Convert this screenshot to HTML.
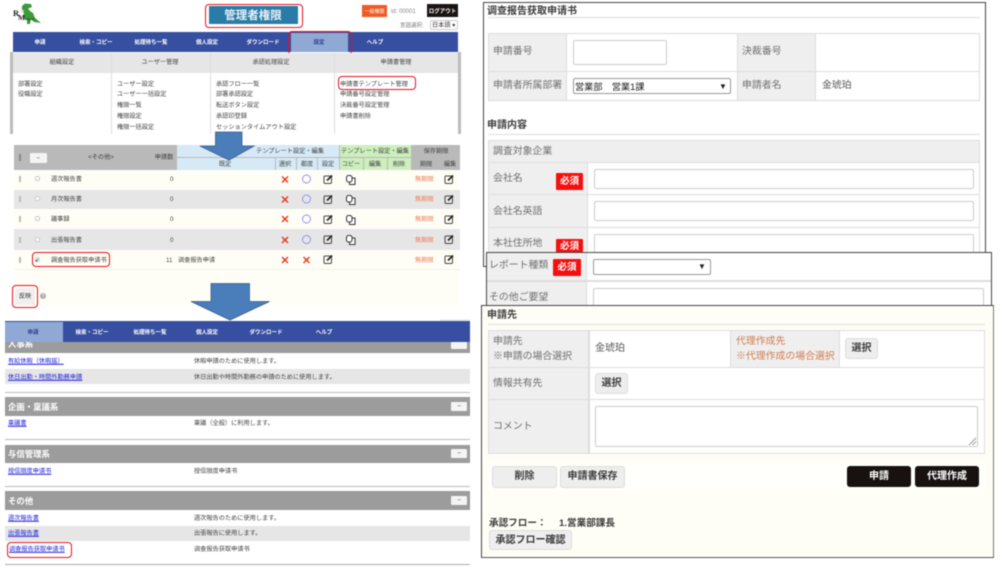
<!DOCTYPE html>
<html lang="ja"><head><meta charset="utf-8"><title>管理者権限</title>
<style>
html,body{margin:0;padding:0;background:#fff}
#w{position:relative;width:1000px;height:572px;overflow:hidden;background:#fff;font-family:"Liberation Sans","Noto Sans CJK JP",sans-serif;font-size:6.2px;color:#444;filter:blur(.4px)}
#w div,#w svg{position:absolute;box-sizing:border-box}
#w span{position:absolute;white-space:nowrap;line-height:12px;transform:translateY(-5.2px)}
#w span.c{transform:translate(-50%,-5.2px)}
#w span.q{transform:translate(-50%,-6px);color:#fff;font-size:9.500px;font-weight:bold}
.n{color:#fff;font-weight:bold;font-size:5.5px}
.r{border:1.3px solid #e8101c;border-radius:4px}
.a{color:#2222dd;text-decoration:underline}
.l{font-size:9.900px;color:#6f6f6f}
.f{background:#fff;border:1px solid #ccc;border-radius:2px}
.g{background:#efefef}
.rq{background:#f50f0f;border-radius:1px}
.b{background:#eee;border:1px solid #ddd;border-radius:3px}
.k{background:#17110f;border-radius:3px}
.h{background:#9c9c9c}
.m{background:#f4f4f4;border-radius:1px}
.bd{color:#3c3c3c;font-weight:bold;font-size:10px}
.w{color:#fff;font-weight:bold;font-size:8.400px}
</style></head><body><div id="w">
<svg width="0" height="0" style="left:0;top:0"><defs>
<g id="x"><path d="M-3-3 3 3M3-3-3 3" stroke="#e8341c" stroke-width="1.400" fill="none"/></g>
<g id="o"><circle r="4" fill="none" stroke="#8f8cf2" stroke-width=".9"/></g>
<g id="e"><rect x="-4" y="-3.500" width="7.500" height="7.500" rx="1.200" fill="none" stroke="#444" stroke-width="1"/><path d="M-1 1 4-4" stroke="#222" stroke-width="1.700"/></g>
<g id="cp"><rect x="-1.500" y="-2" width="5.500" height="6.500" fill="#fff" stroke="#333" stroke-width="1"/><rect x="-4.500" y="-4.500" width="5.500" height="6.500" rx="2" fill="#fff" stroke="#333" stroke-width="1"/></g>
</defs></svg>

<!-- top left -->
<svg style="left:13px;top:3px" width="30" height="22" viewBox="0 0 30 22"><path d="M9 3 12 .5 18 1 19 4 15 5.500 17 8 20 10 22 15 28 20 21 19 18 16 17 21 14 21 14 17 10 15 11 10 9 7Z" fill="#3b9a3a"/><path d="M8 7 11 7 10 11Z" fill="#e8d8c8"/></svg>
<span style="left:13px;top:13px;font:bold 8.500px 'Liberation Serif',serif;color:#222">R</span>
<span style="left:18px;top:18px;font:bold 7.500px 'Liberation Serif',serif;color:#222">M<b style="font-size:3.500px;color:#333">onster</b></span>
<div class="r" style="left:205px;top:4px;width:98px;height:24px"></div>
<div style="left:209px;top:6px;width:89px;height:18px;background:#2a7ca8"></div>
<span class="c" style="left:253px;top:15px;font-size:11.500px;font-weight:bold;color:#e8f2f7">管理者権限</span>
<div style="left:362px;top:5px;width:25px;height:12px;background:#f15a22"></div><span class="c" style="left:374.500px;top:10.500px;color:#fff;font-size:5px">一般権限</span>
<span style="left:391px;top:10.500px;font-size:6px;color:#888">id: 00001</span>
<div style="left:427px;top:4px;width:31px;height:13px;background:#1a1413"></div><span class="c" style="left:442.500px;top:10.500px;color:#fff;font-size:5.500px;font-weight:bold">ログアウト</span>
<span style="left:400px;top:25px;color:#777;font-size:5.500px">言語選択:</span>
<div class="f" style="left:430px;top:20px;width:28px;height:10px"></div><span style="left:432px;top:25px;color:#333">日本語 ▾</span>

<div style="left:13px;top:32px;width:445px;height:20px;background:#374fa0"></div>
<div style="left:291px;top:33px;width:57px;height:19px;background:#8fa9d4"></div>
<span class="c n" style="left:40px;top:42px">申請</span><span class="c n" style="left:96px;top:42px">検索・コピー</span><span class="c n" style="left:151px;top:42px">処理待ち一覧</span><span class="c n" style="left:207px;top:42px">個人設定</span><span class="c n" style="left:263px;top:42px">ダウンロード</span><span class="c n" style="left:319px;top:42px;color:#27408f">設定</span><span class="c n" style="left:375px;top:42px">ヘルプ</span>
<div class="r" style="left:288px;top:31px;width:64px;height:24px;border-width:1.500px"></div>

<div style="left:10px;top:52px;width:3px;height:82px;background:#bbb"></div><div style="left:458px;top:52px;width:3px;height:82px;background:#bbb"></div>
<div style="left:13px;top:53px;width:445px;height:20px;background:#e6e6e6"></div>
<div style="left:111px;top:53px;width:1px;height:81px;background:#ddd"></div><div style="left:210px;top:53px;width:1px;height:81px;background:#ddd"></div><div style="left:334px;top:53px;width:1px;height:81px;background:#ddd"></div>
<span class="c" style="left:62px;top:62px">組織設定</span><span class="c" style="left:160px;top:62px">ユーザー管理</span><span class="c" style="left:271px;top:62px">承認処理設定</span><span class="c" style="left:396px;top:62px">申請書管理</span>
<span style="left:18px;top:83.500px">部署設定</span><span style="left:18px;top:94px">役職設定</span>
<span style="left:117px;top:83.500px">ユーザー設定</span><span style="left:117px;top:94px">ユーザー一括設定</span><span style="left:117px;top:105px">権限一覧</span><span style="left:117px;top:115.500px">権限設定</span><span style="left:117px;top:126.500px">権限一括設定</span>
<span style="left:216px;top:83.500px">承認フロー一覧</span><span style="left:216px;top:94px">部署承認設定</span><span style="left:216px;top:105px">転送ボタン設定</span><span style="left:216px;top:115.500px">承認印登録</span><span style="left:216px;top:126.500px">セッションタイムアウト設定</span>
<span style="left:340px;top:83.500px">申請書テンプレート管理</span><span style="left:340px;top:94px">申請番号設定管理</span><span style="left:340px;top:105px">決裁番号設定管理</span><span style="left:340px;top:115.500px">申請書削除</span>
<div class="r" style="left:338px;top:75.500px;width:78px;height:14px"></div>

<!-- template table -->
<div style="left:14px;top:145px;width:446px;height:161px;background:#fffef6"></div>
<div style="left:14px;top:145px;width:446px;height:25px;background:#b9b9b9"></div>
<div style="left:177px;top:145px;width:162px;height:12px;background:#d6e9f6"></div>
<div style="left:177px;top:158px;width:98px;height:12px;background:#d6e9f6"></div><div style="left:276px;top:158px;width:20px;height:12px;background:#d6e9f6"></div><div style="left:297px;top:158px;width:20px;height:12px;background:#d6e9f6"></div><div style="left:318px;top:158px;width:21px;height:12px;background:#d6e9f6"></div>
<div style="left:340px;top:145px;width:71px;height:12px;background:#cdeebd"></div>
<div style="left:340px;top:158px;width:23px;height:12px;background:#cdeebd"></div><div style="left:364px;top:158px;width:23px;height:12px;background:#cdeebd"></div><div style="left:388px;top:158px;width:23px;height:12px;background:#cdeebd"></div>
<div style="left:19px;top:154px;width:2px;height:7px;background:#888"></div>
<div class="m" style="left:30px;top:153px;width:17px;height:10px"></div><span class="c" style="left:38px;top:158px">−</span>
<span class="c" style="left:101px;top:157px">&lt;その他&gt;</span><span class="c" style="left:164px;top:157px">申請数</span>
<span class="c" style="left:290px;top:151px">テンプレート設定・編集</span>
<span class="c" style="left:225px;top:164px">既定</span><span class="c" style="left:285px;top:164px">選択</span><span class="c" style="left:307px;top:164px">都度</span><span class="c" style="left:328px;top:164px">設定</span>
<span class="c" style="left:375px;top:151px">テンプレート設定・編集</span><span class="c" style="left:351px;top:164px">コピー</span><span class="c" style="left:375px;top:164px">編集</span><span class="c" style="left:399px;top:164px">削除</span>
<span class="c" style="left:436px;top:151px">保存期限</span><span class="c" style="left:426px;top:164px">期限</span><span class="c" style="left:450px;top:164px">編集</span>

<div style="left:14px;top:190px;width:446px;height:19px;background:#e6e6e6"></div>
<div style="left:14px;top:229px;width:446px;height:21px;background:#e6e6e6"></div>
<div style="left:14px;top:269px;width:446px;height:1px;background:#eee"></div>

<div style="left:19px;top:176px;width:2px;height:6px;background:#bbb"></div><div style="left:19px;top:196px;width:2px;height:6px;background:#bbb"></div><div style="left:19px;top:216px;width:2px;height:6px;background:#bbb"></div><div style="left:19px;top:237px;width:2px;height:6px;background:#bbb"></div><div style="left:19px;top:257px;width:2px;height:6px;background:#bbb"></div>
<div class="f" style="left:35px;top:176px;width:5px;height:5px"></div><div class="f" style="left:35px;top:196px;width:5px;height:5px"></div><div class="f" style="left:35px;top:216px;width:5px;height:5px"></div><div class="f" style="left:35px;top:237px;width:5px;height:5px"></div>
<div class="f" style="left:35px;top:257px;width:5px;height:5px"></div><span style="left:35px;top:259.500px;font-size:5px;color:#222">✔</span>
<span style="left:51px;top:179px">週次報告書</span><span style="left:51px;top:199px">月次報告書</span><span style="left:51px;top:219px">議事録</span><span style="left:51px;top:239.500px">出張報告書</span><span style="left:51px;top:259.500px">調査報告获取申请书</span>
<span style="left:170px;top:179px">0</span><span style="left:170px;top:199px">0</span><span style="left:170px;top:219px">0</span><span style="left:170px;top:239.500px">0</span><span style="left:166px;top:259.500px">11</span>
<span style="left:178px;top:259.500px">调查报告申请</span>
<div class="r" style="left:32px;top:252px;width:78px;height:15px"></div>
<svg style="left:0;top:0" width="460" height="270">
<use href="#x" x="285" y="179.500"/><use href="#x" x="285" y="199.500"/><use href="#x" x="285" y="219"/><use href="#x" x="285" y="240"/><use href="#x" x="285" y="260"/><use href="#x" x="306.500" y="260"/>
<use href="#o" x="306.500" y="179"/><use href="#o" x="306.500" y="199"/><use href="#o" x="306.500" y="219"/><use href="#o" x="306.500" y="239.500"/>
<use href="#e" x="328" y="179.500"/><use href="#e" x="328" y="199.500"/><use href="#e" x="328" y="219.500"/><use href="#e" x="328" y="239.500"/><use href="#e" x="328" y="259.500"/>
<use href="#e" x="449" y="179.500"/><use href="#e" x="449" y="199.500"/><use href="#e" x="449" y="219.500"/><use href="#e" x="449" y="239.500"/><use href="#e" x="449" y="259.500"/>
<use href="#cp" x="351" y="180"/><use href="#cp" x="351" y="200"/><use href="#cp" x="351" y="220"/><use href="#cp" x="351" y="240"/>
</svg>
<span style="left:415px;top:179px;color:#ef7a5a">無期限</span><span style="left:415px;top:199px;color:#ef7a5a">無期限</span><span style="left:415px;top:219px;color:#ef7a5a">無期限</span><span style="left:415px;top:239.500px;color:#ef7a5a">無期限</span><span style="left:415px;top:259.500px;color:#ef7a5a">無期限</span>

<div class="r" style="left:12px;top:285px;width:26px;height:23px;border-width:1.500px"></div>
<div class="m" style="left:15px;top:288px;width:20px;height:17px;background:#efefef"></div><span class="c" style="left:25px;top:296px;color:#333">反映</span>
<div style="left:40px;top:293px;width:6px;height:6px;border-radius:50%;background:#aaa"></div><span class="c" style="left:43px;top:296px;color:#fff;font-size:5px">?</span>

<!-- arrows -->
<svg style="left:190px;top:130px" width="85" height="195" viewBox="0 0 85 195"><path d="M25.500 2H52V16H64L39 30 10 16H25.500Z" fill="#4a7ebb" stroke="#385d8a" stroke-width=".8"/><path d="M21 153.500H59.500V171.500H79.500L40 190 1 171.500H21Z" fill="#4a7ebb" stroke="#385d8a" stroke-width=".8"/></svg>

<!-- app list -->
<div style="left:440px;top:319px;width:30px;height:2px;background:#eee"></div>
<div class="h" style="left:5px;top:342px;width:465px;height:11px"></div>
<span class="w" style="left:8px;top:343px">人事系</span>
<div class="m" style="left:451px;top:342px;width:16px;height:7px"></div>
<div style="left:5px;top:321px;width:465px;height:21px;background:#374fa0"></div>
<div style="left:5px;top:322px;width:58px;height:20px;background:#8fa9d4"></div>
<span class="c n" style="left:33px;top:331.500px;color:#27408f">申請</span><span class="c n" style="left:92px;top:331.500px">検索・コピー</span><span class="c n" style="left:150px;top:331.500px">処理待ち一覧</span><span class="c n" style="left:207px;top:331.500px">個人設定</span><span class="c n" style="left:266px;top:331.500px">ダウンロード</span><span class="c n" style="left:324px;top:331.500px">ヘルプ</span>

<span class="a" style="left:8px;top:361px">有給休暇（休暇届）</span><span style="left:194px;top:361px">休暇申請のために使用します。</span>
<div style="left:5px;top:369px;width:465px;height:15px;background:#e6e6e6"></div>
<span class="a" style="left:8px;top:376.500px">休日出勤・時間外勤務申請</span><span style="left:194px;top:376.500px">休日出勤や時間外勤務の申請のために使用します。</span>
<div style="left:5px;top:391.500px;width:465px;height:1px;background:#bbb"></div>

<div class="h" style="left:5px;top:397px;width:465px;height:19px"></div><span class="w" style="left:8px;top:406px">企画・稟議系</span><div class="m" style="left:451px;top:402px;width:16px;height:9px"></div><span class="c" style="left:459px;top:406px">−</span>
<span class="a" style="left:8px;top:423px">稟議書</span><span style="left:194px;top:423px">稟議（全般）に利用します。</span>
<div style="left:5px;top:438.500px;width:465px;height:1px;background:#bbb"></div>

<div class="h" style="left:5px;top:445px;width:465px;height:18px"></div><span class="w" style="left:8px;top:453px">与信管理系</span><div class="m" style="left:451px;top:449px;width:16px;height:9px"></div><span class="c" style="left:459px;top:453px">−</span>
<span class="a" style="left:8px;top:470.500px">授信限度申请书</span><span style="left:194px;top:470.500px">授信限度申请书</span>
<div style="left:5px;top:485.500px;width:465px;height:1px;background:#bbb"></div>

<div class="h" style="left:5px;top:491px;width:465px;height:19px"></div><span class="w" style="left:8px;top:500px">その他</span><div class="m" style="left:451px;top:496px;width:16px;height:9px"></div><span class="c" style="left:459px;top:500px">−</span>
<span class="a" style="left:8px;top:517.500px">週次報告書</span><span style="left:194px;top:517.500px">週次報告のために使用します。</span>
<div style="left:5px;top:526px;width:465px;height:15px;background:#e6e6e6"></div>
<span class="a" style="left:8px;top:533px">出張報告書</span><span style="left:194px;top:533px">出張報告に使用します。</span>
<span class="a" style="left:9px;top:549px">调查报告获取申请书</span><span style="left:194px;top:549px">调查报告获取申请书</span>
<div class="r" style="left:7px;top:542px;width:65px;height:16px"></div>
<div style="left:5px;top:564px;width:465px;height:1px;background:#aaa"></div>

<!-- panel 1 -->
<div style="left:483px;top:2px;width:503px;height:265px;background:#fff;border:1px solid #444"></div>
<span class="bd" style="left:487px;top:11px">调查报告获取申请书</span>
<div style="left:488px;top:17px;width:492px;height:1px;background:#ddd"></div>
<div style="left:488px;top:33px;width:492px;height:68px;border:1.500px solid #ddd"></div>
<div class="g" style="left:489px;top:34px;width:77px;height:66px"></div><div class="g" style="left:738px;top:34px;width:77px;height:66px"></div>
<div style="left:489px;top:71px;width:490px;height:1px;background:#ddd"></div>
<div style="left:566px;top:34px;width:1px;height:66px;background:#ddd"></div><div style="left:737px;top:34px;width:1px;height:66px;background:#ddd"></div><div style="left:815px;top:34px;width:1px;height:66px;background:#ddd"></div>
<span class="l" style="left:493px;top:51px">申請番号</span><span class="l" style="left:742px;top:51px">決裁番号</span><span class="l" style="left:493px;top:85px">申請者所属部署</span><span class="l" style="left:742px;top:85px">申請者名</span><span class="l" style="left:822px;top:85px;color:#555">金琥珀</span>
<div class="f" style="left:573px;top:40px;width:94px;height:25px"></div>
<div class="f" style="left:573px;top:78px;width:158px;height:16px;border-color:#999"></div><span style="left:575px;top:86px;font-size:9.200px;color:#222">営業部　営業1課</span><span style="left:719px;top:85.500px;font-size:8px;color:#222">▼</span>
<span class="bd" style="left:487px;top:125px">申請内容</span>
<div style="left:488px;top:134px;width:492px;height:1px;background:#ddd"></div>
<div class="g" style="left:488px;top:140px;width:492px;height:23px;border:1px solid #ddd"></div><span class="l" style="left:493px;top:151px">調査対象企業</span>
<div class="g" style="left:488px;top:163px;width:99px;height:105px"></div>
<div style="left:587px;top:163px;width:1px;height:105px;background:#ddd"></div><div style="left:488px;top:163px;width:1px;height:105px;background:#ddd"></div><div style="left:979px;top:163px;width:1px;height:105px;background:#ddd"></div>
<div style="left:488px;top:194px;width:492px;height:1px;background:#ddd"></div><div style="left:488px;top:227px;width:492px;height:1px;background:#ddd"></div>
<span class="l" style="left:493px;top:178px">会社名</span><span class="l" style="left:493px;top:210.500px">会社名英語</span><span class="l" style="left:493px;top:243px">本社住所地</span>
<div class="rq" style="left:556px;top:173px;width:27px;height:17px"></div><span class="q" style="left:569.500px;top:182px">必須</span>
<div class="rq" style="left:556px;top:239px;width:27px;height:17px"></div><span class="q" style="left:569.500px;top:247px">必須</span>
<div class="f" style="left:594px;top:169px;width:380px;height:20px"></div><div class="f" style="left:594px;top:201px;width:380px;height:20px"></div><div class="f" style="left:594px;top:234px;width:380px;height:20px"></div>

<!-- panel 2 -->
<div style="left:486px;top:252px;width:506px;height:54px;background:#fff;border:1px solid #444"></div>
<div class="g" style="left:487px;top:253px;width:99px;height:52px"></div>
<div style="left:586px;top:253px;width:1px;height:52px;background:#ddd"></div>
<div style="left:487px;top:280px;width:504px;height:1.500px;background:#ddd"></div>
<span class="l" style="left:489px;top:265px">レポート種類</span><span class="l" style="left:489px;top:297px">その他ご要望</span>
<div class="rq" style="left:553px;top:259px;width:28px;height:17px"></div><span class="q" style="left:567px;top:268px">必須</span>
<div class="f" style="left:593px;top:259px;width:118px;height:16px;border-color:#999"></div><span style="left:698px;top:265.500px;font-size:8px;color:#222">▼</span>
<div class="f" style="left:593px;top:288px;width:391px;height:30px"></div>

<!-- panel 3 -->
<div style="left:481px;top:305px;width:513px;height:253px;background:#fffef6;border:1px solid #444;border-right:1.500px solid #777;border-bottom:1.500px solid #555"></div>
<span class="bd" style="left:487px;top:315px">申請先</span>
<div style="left:488px;top:323.500px;width:497px;height:1px;background:#ddd"></div>
<div style="left:488px;top:330px;width:497px;height:124px;background:#fff;border:1px solid #ddd"></div>
<div class="g" style="left:489px;top:331px;width:99px;height:122px"></div>
<div class="g" style="left:731px;top:331px;width:108px;height:36px"></div>
<div style="left:588px;top:331px;width:1.500px;height:122px;background:#ddd"></div><div style="left:730px;top:331px;width:1px;height:36px;background:#ddd"></div><div style="left:839px;top:331px;width:1px;height:36px;background:#ddd"></div>
<div style="left:489px;top:366.500px;width:495px;height:1.500px;background:#ddd"></div><div style="left:489px;top:398.500px;width:495px;height:1.500px;background:#ddd"></div>
<span class="l" style="left:493px;top:341px">申請先</span><span class="l" style="left:493px;top:356px">※申請の場合選択</span>
<span style="left:595px;top:348px;font-size:10px;color:#555">金琥珀</span>
<span class="l" style="left:736px;top:341px;color:#cf7c50">代理作成先</span><span class="l" style="left:736px;top:356px;color:#cf7c50">※代理作成の場合選択</span>
<div class="b" style="left:845px;top:338px;width:33px;height:21px"></div><span class="c bd" style="left:861.500px;top:348px">選択</span>
<span class="l" style="left:493px;top:383px">情報共有先</span>
<div class="b" style="left:595px;top:373px;width:33px;height:21px"></div><span class="c bd" style="left:611.500px;top:383px">選択</span>
<span class="l" style="left:493px;top:426px">コメント</span>
<div class="f" style="left:595px;top:406px;width:383px;height:41px"></div>
<svg style="left:968px;top:437px" width="9" height="9"><path d="M1 8 8 1M4.500 8 8 4.500" stroke="#666" stroke-width=".7"/></svg>
<div style="left:488px;top:463px;width:497px;height:27px;background:#fffffb"></div>
<div class="b" style="left:492px;top:466px;width:65px;height:22px"></div><span class="c bd" style="left:524.500px;top:476px">削除</span>
<div class="b" style="left:560px;top:466px;width:65px;height:22px"></div><span class="c bd" style="left:592.500px;top:476px">申請書保存</span>
<div class="k" style="left:847px;top:466px;width:64px;height:21px"></div><span class="c bd" style="left:879px;top:476px;color:#fff">申請</span>
<div class="k" style="left:915px;top:466px;width:64px;height:21px"></div><span class="c bd" style="left:947px;top:476px;color:#fff">代理作成</span>
<span class="bd" style="left:489px;top:523px;font-size:9.600px">承認フロー：</span><span class="bd" style="left:559px;top:523px;font-size:9.600px">1.営業部課長</span>
<div class="b" style="left:489px;top:530px;width:83px;height:20px"></div><span class="c bd" style="left:530.500px;top:540px">承認フロー確認</span>
</div></body></html>
